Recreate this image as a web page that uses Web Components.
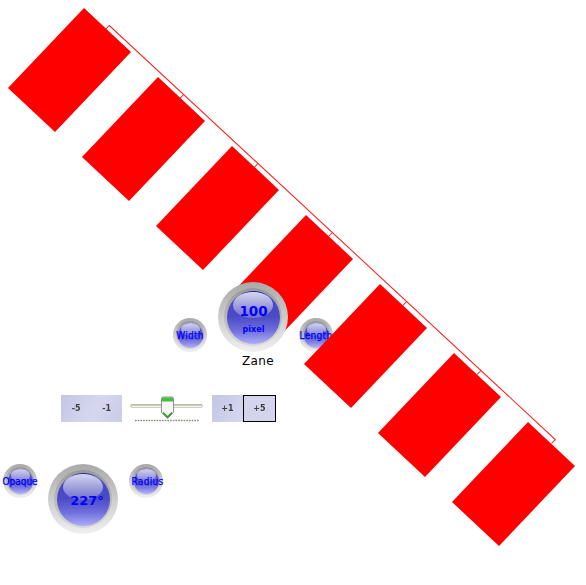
<!DOCTYPE html>
<html lang="en">
<head>
<meta charset="utf-8">
<title>Zane</title>
<style>
  html, body { margin: 0; background: #fff; height: 585px; overflow: hidden; font-family: "DejaVu Sans", sans-serif; }
  .label { font: 10px "DejaVu Sans Condensed", "DejaVu Sans", sans-serif; font-stretch: condensed; letter-spacing: .3px; color: #0000ff; -webkit-text-stroke: .25px #0000ff; white-space: nowrap; }
  .label.tight { letter-spacing: 0; }
  .label.shifted { padding-left: 3px; }
  .value { font: bold 13.5px/15px "DejaVu Sans", sans-serif; color: #0000ff; }
  .value.angle { font-size: 13px; }
  .unit { font: bold 8px/10px "DejaVu Sans", sans-serif; color: #0000ff; margin-top: 6px; }
</style>
</head>
<body>
<rect-layer from="0" to="4" ruler></rect-layer>
<control-panel>
  <div slot="top">
    <glass-dial><span class="label">Width</span></glass-dial>
    <glass-dial large class="hundred"><span class="value">100</span><span class="unit">pixel</span></glass-dial>
    <glass-dial><span class="label">Length</span></glass-dial>
  </div>
  <span slot="name">Zane</span>
  <div slot="steppers">
    <step-group style="width:61px"><step-button>-5</step-button><step-button>-1</step-button></step-group>
    <tick-slider></tick-slider>
    <step-group style="width:64px"><step-button>+1</step-button><step-button selected>+5</step-button></step-group>
  </div>
  <div slot="bottom">
    <glass-dial><span class="label tight">Opaque</span></glass-dial>
    <glass-dial large class="angle"><span class="value angle">227°</span></glass-dial>
    <glass-dial><span class="label shifted">Radius</span></glass-dial>
  </div>
</control-panel>
<rect-layer from="4" to="7"></rect-layer>

<script>
class RectLayer extends HTMLElement {
  connectedCallback() {
    const from = +this.getAttribute('from'), to = +this.getAttribute('to');
    let polys = '';
    for (let i = from; i < to; i++) {
      const x = 84 + 74 * i, y = 8 + 69 * i;
      polys += `<polygon fill="#ff0000" points="${x},${y} ${x + 47},${y + 44} ${x - 29},${y + 124} ${x - 76},${y + 80}"/>`;
    }
    let ruler = '';
    if (this.hasAttribute('ruler')) {
      let d = 'M105.500 29.500 L109.300 25.500 L555.300 439.500 L551.500 443.500';
      for (let i = 1; i < 6; i++) {
        const x = 109.3 + 74.33 * i, y = 25.5 + 69 * i;
        d += ` M${x} ${y} L${x - 3.8} ${y + 4}`;
      }
      ruler = `<path d="${d}" fill="none" stroke="#ff2020" stroke-width="1.050"/>`;
    }
    this.attachShadow({ mode: 'open' }).innerHTML = `
      <style>:host{position:absolute;left:0;top:0;width:586px;height:585px;display:block;pointer-events:none}
      svg{display:block}</style>
      <svg width="586" height="585" viewBox="0 0 586 585">${ruler}${polys}</svg>`;
  }
}
customElements.define('rect-layer', RectLayer);

class ControlPanel extends HTMLElement {
  constructor() {
    super();
    this.attachShadow({ mode: 'open' }).innerHTML = `
      <style>
        :host{position:absolute;left:0;top:0;width:586px;height:585px;display:flex;flex-direction:column;box-sizing:border-box;padding-top:282px}
        ::slotted([slot=top]){display:flex;align-items:flex-end;gap:11px;padding-left:173px;height:70px}
        .name{display:block;padding-left:242px;margin-top:1px;font:12px/16px "DejaVu Sans",sans-serif;letter-spacing:.35px;color:#000}
        ::slotted([slot=steppers]){display:flex;align-items:flex-start;margin-top:26px;padding-left:61px;height:27px}
        ::slotted([slot=bottom]){display:flex;align-items:flex-start;gap:11px;margin-top:42px;padding-left:3px}
      </style>
      <slot name="top"></slot>
      <div class="name"><slot name="name"></slot></div>
      <slot name="steppers"></slot>
      <slot name="bottom"></slot>`;
  }
}
customElements.define('control-panel', ControlPanel);

class GlassDial extends HTMLElement {
  constructor() {
    super();
    this.attachShadow({ mode: 'open' }).innerHTML = `
      <style>
        :host{--size:34px;--ring:3px;--edge:1.500px;--b0:#2a2aa8;--b1:#5656ca;--b2:#7e7ee0;--b3:#b4b4fc;--s0:#d4d4f0;--s1:#7c7cd6;
          display:block;flex:none;width:var(--size);height:var(--size);position:relative;
          border-radius:50%;box-sizing:border-box;padding:var(--ring);background:linear-gradient(#a9a9a9,#f0f0f0)}
        :host([large]){--size:70px;--ring:6px;--edge:2.500px;--b0:#1c1ca6;--b1:#4a4ac6;--b2:#7070dc;--b3:#adadfb;--s0:#d6d6ee;--s1:#6d6dcb}
        .ring{height:100%;box-sizing:border-box;border-radius:50%;padding:var(--edge);background:linear-gradient(#979797,#d8d8d8)}
        .ball{position:relative;height:100%;border-radius:50%;box-sizing:border-box;
          display:flex;flex-direction:column;align-items:center;justify-content:center;
          background:linear-gradient(var(--b0) 0,var(--b1) 8%,var(--b1) 48%,var(--b2) 75%,var(--b3) 100%)}
        .shine{position:absolute;left:12%;right:12%;top:2.500%;height:50%;border-radius:50%;
          background:linear-gradient(var(--s0),var(--s1))}
        .text{position:relative;display:flex;flex-direction:column;align-items:center;width:100%;white-space:nowrap}
        :host(.hundred) .text{padding-top:5px;box-sizing:border-box;padding-left:1px}
        :host(.angle) .text{padding-left:8px;box-sizing:border-box;padding-top:2px}
        :host(:not([large])) .ball{padding-top:1px}
      </style>
      <div class="ring"><div class="ball"><div class="shine"></div><div class="text"><slot></slot></div></div></div>`;
  }
}
customElements.define('glass-dial', GlassDial);

class StepGroup extends HTMLElement {
  constructor() {
    super();
    this.attachShadow({ mode: 'open' }).innerHTML = `
      <style>:host{display:flex;flex:none;height:27px;background:linear-gradient(120deg,#c3c5e4,#d6d7ef 55%,#c9cbe8)}</style><slot></slot>`;
  }
}
customElements.define('step-group', StepGroup);

class StepButton extends HTMLElement {
  constructor() {
    super();
    this.attachShadow({ mode: 'open' }).innerHTML = `
      <style>
        :host{display:flex;flex:1 1 0;align-items:center;justify-content:center;height:27px;box-sizing:border-box;
          font:bold 8px "DejaVu Sans",sans-serif;color:#404040}
        :host([selected]){border:1px solid #000;background:#d4d5ec}
        span{filter:blur(.35px)}
      </style><span><slot></slot></span>`;
  }
}
customElements.define('step-button', StepButton);

class TickSlider extends HTMLElement {
  constructor() {
    super();
    this.attachShadow({ mode: 'open' }).innerHTML = `
      <style>
        :host{display:block;flex:none;width:73px;height:27px;margin:0 9px 0 8px}
        svg{display:block}
      </style>
      <svg width="73" height="27" viewBox="0 0 73 27">
        <rect x="0.500" y="9.500" width="72" height="3" rx="1.500" fill="#f4f4ec" stroke="#d0d0c4" stroke-width="1"/>
        <path d="M1 10h71" stroke="#a4a49a" stroke-width="1"/>
        <path d="M5 25.500H69" stroke="#8a8a82" stroke-width="1.600" stroke-dasharray="1.600 1.100"/>
        <path d="M31.500 3.500Q31.500 2 33 2H42Q43.500 2 43.500 3.500V17.500L37.500 23.500L31.500 17.500Z" fill="#f6f6f2" stroke="#8b9290" stroke-width="1"/>
        <rect x="32" y="2.500" width="11" height="4" fill="#3fbf3f"/>
        <path d="M33 17.500L37.500 22L42 17.500" fill="none" stroke="#2f9f2f" stroke-width="1.600"/>
      </svg>`;
  }
}
customElements.define('tick-slider', TickSlider);
</script>
</body>
</html>
